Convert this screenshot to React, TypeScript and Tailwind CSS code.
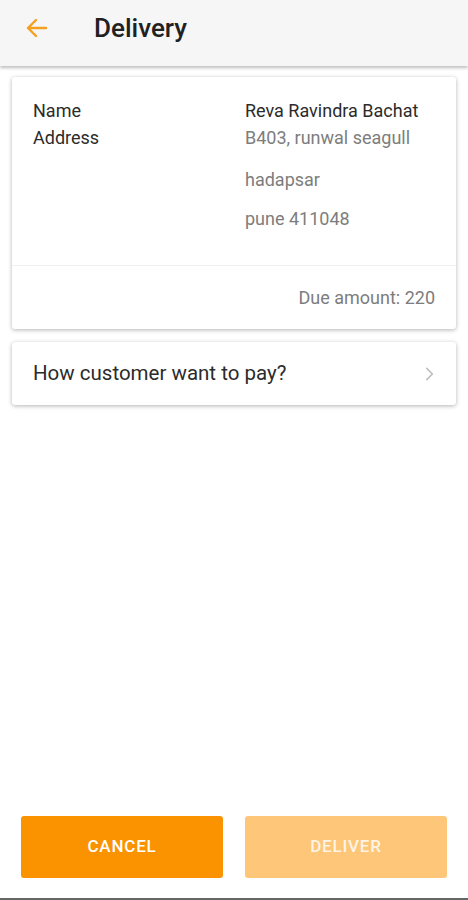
import React from 'react';

export default function App() {
    return (
        <div className="w-[468px] h-[900px] bg-white flex flex-col font-['Roboto',sans-serif] overflow-hidden">
            {/* Toolbar */}
            <header className="h-[66px] shrink-0 bg-[#f6f6f6] flex items-center pb-[10px] shadow-[0_2px_3px_rgba(0,0,0,0.25)] z-10">
                <button className="w-[75px] pl-[25px] flex items-center">
                    <svg className="w-[24px] h-[24px]" viewBox="0 0 24 24" fill="none" stroke="#f5a021" strokeWidth="2.4" strokeLinecap="round" strokeLinejoin="round">
                        <path d="M21 12H3M11 4l-8 8 8 8" />
                    </svg>
                </button>
                <h1 className="ml-[19px] text-[26px] font-medium text-[#212121]">Delivery</h1>
            </header>

            <main className="flex-1 flex flex-col px-[12px] pt-[11px] gap-[13px]">
                {/* Customer card */}
                <section className="bg-white rounded-[3px] shadow-[0_1px_4px_rgba(0,0,0,0.3)]">
                    <div className="grid grid-cols-[212px_1fr] px-[21px] pt-[20px] pb-[33px] text-[18px] leading-[27px]">
                        <span className="text-[#2b2b2b]">Name</span>
                        <span className="text-[#2b2b2b]">Reva Ravindra Bachat</span>
                        <span className="text-[#2b2b2b]">Address</span>
                        <div className="flex flex-col text-[#7d7d7d]">
                            <span>B403, runwal seagull</span>
                            <span className="mt-[15px]">hadapsar</span>
                            <span className="mt-[12px]">pune 411048</span>
                        </div>
                    </div>
                    <div className="border-t border-[#f0f0f0] h-[64px] flex items-center justify-end pr-[21px] text-[18px] text-[#7d7d7d]">
                        Due amount: 220
                    </div>
                </section>

                {/* Payment method */}
                <button className="h-[63px] bg-white rounded-[3px] shadow-[0_1px_4px_rgba(0,0,0,0.3)] flex items-center justify-between pl-[21px] pr-[18px] text-left">
                    <span className="text-[20.5px] text-[#2b2b2b]">How customer want to pay?</span>
                    <svg className="w-[18px] h-[18px]" viewBox="0 0 16 16" fill="none" stroke="#bdbdbd" strokeWidth="1.4" strokeLinecap="round" strokeLinejoin="round">
                        <path d="M6 3l5 5-5 5" />
                    </svg>
                </button>
            </main>

            {/* Actions */}
            <footer className="flex gap-[22px] px-[21px] pb-[20px]">
                <button className="w-[202px] h-[62px] rounded-[3px] bg-[#fb9200] text-white text-[17px] font-medium tracking-[0.8px]">
                    CANCEL
                </button>
                <button className="w-[202px] h-[62px] rounded-[3px] bg-[#fdc679] text-[#fff4e4] text-[17px] font-medium tracking-[0.8px]">
                    DELIVER
                </button>
            </footer>
            <div className="h-[2px] bg-[#666666] shrink-0" />
        </div>
    );
}
